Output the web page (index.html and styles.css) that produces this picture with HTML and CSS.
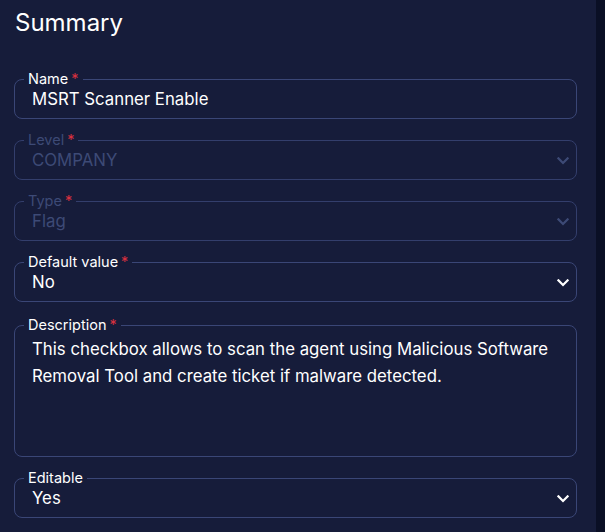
FILE: index.html
```html
<!DOCTYPE html>
<html lang="en">
<head>
<meta charset="utf-8">
<title>Summary</title>
<link rel="stylesheet" href="styles.css">
</head>
<body>
<div class="page">
  <main class="panel">
    <h1 class="title">Summary</h1>
    <form class="form">
      <fieldset class="field">
        <legend class="label">Name<span class="req">*</span></legend>
        <div class="control"><span class="value">MSRT Scanner Enable</span></div>
      </fieldset>

      <fieldset class="field disabled">
        <legend class="label">Level<span class="req">*</span></legend>
        <div class="control select"><span class="value">COMPANY</span>
          <svg class="chev" width="12" height="8" viewBox="0 0 12 8"><polyline points="1.4,1.4 6,6 10.6,1.4" fill="none" stroke="currentColor" stroke-width="2.2" stroke-linecap="square"/></svg>
        </div>
      </fieldset>

      <fieldset class="field disabled">
        <legend class="label">Type<span class="req">*</span></legend>
        <div class="control select"><span class="value">Flag</span>
          <svg class="chev" width="12" height="8" viewBox="0 0 12 8"><polyline points="1.4,1.4 6,6 10.6,1.4" fill="none" stroke="currentColor" stroke-width="2.2" stroke-linecap="square"/></svg>
        </div>
      </fieldset>

      <fieldset class="field">
        <legend class="label">Default value<span class="req">*</span></legend>
        <div class="control select"><span class="value">No</span>
          <svg class="chev" width="12" height="8" viewBox="0 0 12 8"><polyline points="1.4,1.4 6,6 10.6,1.4" fill="none" stroke="currentColor" stroke-width="2.2" stroke-linecap="square"/></svg>
        </div>
      </fieldset>

      <fieldset class="field desc">
        <legend class="label">Description<span class="req">*</span></legend>
        <div class="textarea">This checkbox allows to scan the agent using Malicious Software Removal Tool and create ticket if malware detected.</div>
      </fieldset>

      <fieldset class="field">
        <legend class="label">Editable</legend>
        <div class="control select"><span class="value">Yes</span>
          <svg class="chev" width="12" height="8" viewBox="0 0 12 8"><polyline points="1.4,1.4 6,6 10.6,1.4" fill="none" stroke="currentColor" stroke-width="2.2" stroke-linecap="square"/></svg>
        </div>
      </fieldset>
    </form>
  </main>
  <div class="strip"></div>
</div>
</body>
</html>
```

FILE: styles.css
```css
* { box-sizing: border-box; }

html, body {
  margin: 0;
  padding: 0;
  height: 100%;
}

body {
  background: #0a0f25;
  font-family: Inter, "Noto Sans", sans-serif;
  color: #ffffff;
}

.page {
  display: flex;
  min-height: 532px;
}

.panel {
  width: 596px;
  flex: none;
  background: #161c3a;
  padding: 8px 19px 0 14px;
}

.strip {
  flex: 1;
  background: #0a0f25;
}

.title {
  margin: 0;
  font-size: 24px;
  line-height: 30px;
  font-weight: 400;
  color: #ffffff;
  padding-left: 1px;
}

.form {
  display: flex;
  flex-direction: column;
  margin-top: 33px;
}

.field {
  margin: 0 0 13px 0;
  padding: 0;
  border: 1px solid #3a4676;
  border-radius: 8px;
  min-inline-size: 0;
}

.label {
  margin-left: 9px;
  padding: 0 4px;
  font-size: 14.5px;
  line-height: 16px;
  color: #ffffff;
}

.req {
  color: #d8303f;
  margin-left: 3px;
}

.control {
  display: flex;
  align-items: center;
  padding: 2px 7px 9px 17px;
  font-size: 16.8px;
  line-height: 20px;
  color: #ffffff;
}

.value {
  flex: 1;
}

.chev {
  flex: none;
  color: #ffffff;
  margin-top: 1px;
}

.disabled {
  border-color: #333e6c;
}

.disabled .label,
.disabled .value,
.disabled .chev {
  color: #3d4a76;
}

.desc {
  margin-top: 2px;
}

.textarea {
  height: 123px;
  padding: 3px 16px 0 17px;
  font-size: 16.8px;
  line-height: 26.7px;
  color: #ffffff;
}
```
